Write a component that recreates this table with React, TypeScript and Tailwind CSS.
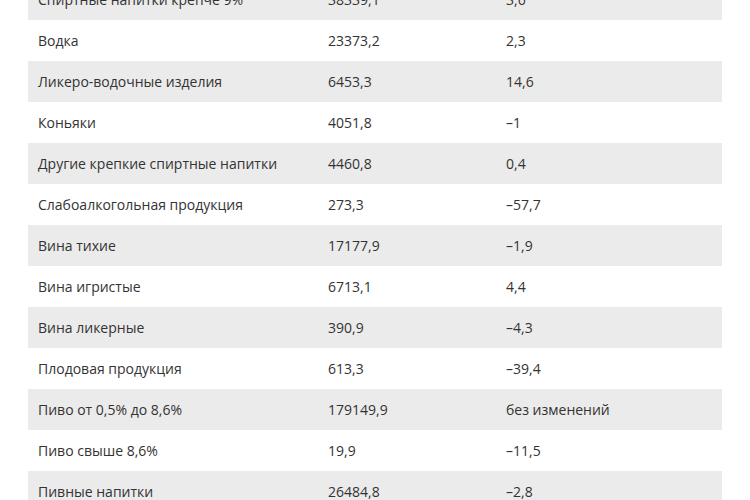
import React from 'react';

const rows: [string, string, string][] = [
  ['Спиртные напитки крепче 9%', '38339,1', '3,6'],
  ['Водка', '23373,2', '2,3'],
  ['Ликеро-водочные изделия', '6453,3', '14,6'],
  ['Коньяки', '4051,8', '–1'],
  ['Другие крепкие спиртные напитки', '4460,8', '0,4'],
  ['Слабоалкогольная продукция', '273,3', '–57,7'],
  ['Вина тихие', '17177,9', '–1,9'],
  ['Вина игристые', '6713,1', '4,4'],
  ['Вина ликерные', '390,9', '–4,3'],
  ['Плодовая продукция', '613,3', '–39,4'],
  ['Пиво от 0,5% до 8,6%', '179149,9', 'без изменений'],
  ['Пиво свыше 8,6%', '19,9', '–11,5'],
  ['Пивные напитки', '26484,8', '–2,8'],
];

export default function App() {
  return (
    <div
      className="w-[750px] h-[500px] overflow-hidden bg-white"
      style={{ fontFamily: '"Open Sans", "Noto Sans", sans-serif' }}
    >
      <div className="mx-[28px] -mt-[21px] flex flex-col text-[14px] text-[#333333]">
        {rows.map(([name, volume, change], i) => (
          <div
            key={name}
            className={`grid grid-cols-[290px_178px_1fr] h-[41px] items-center ${i % 2 === 0 ? 'bg-[#ebebeb]' : 'bg-white'}`}
          >
            <div className="pl-[10px]">{name}</div>
            <div className="pl-[10px]">{volume}</div>
            <div className="pl-[10px]">{change}</div>
          </div>
        ))}
      </div>
    </div>
  );
}
